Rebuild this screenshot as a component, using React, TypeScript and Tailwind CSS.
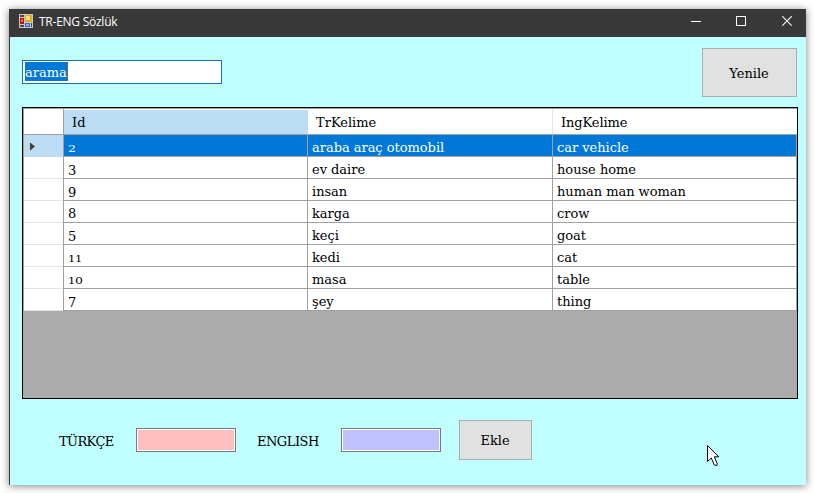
import React from "react";

const rows = [
  { id: "2", tr: "araba araç otomobil", en: "car vehicle" },
  { id: "3", tr: "ev daire", en: "house home" },
  { id: "9", tr: "insan", en: "human man woman" },
  { id: "8", tr: "karga", en: "crow" },
  { id: "5", tr: "keçi", en: "goat" },
  { id: "11", tr: "kedi", en: "cat" },
  { id: "10", tr: "masa", en: "table" },
  { id: "7", tr: "şey", en: "thing" },
];

/* Old-style numerals: 0-2 sit at x-height, 3/5/7/9 drop below the baseline. */
function digitClass(d: string) {
  if (d === "1") return "inline-block text-[10px] w-[7px] origin-left scale-x-[1.15]";
  if ("02".includes(d)) return "inline-block text-[10px] w-[8px] origin-left scale-x-[1.25]";
  if ("68".includes(d)) return "inline-block text-[13px]";
  return "inline-block text-[13px] translate-y-[1px]";
}

function OldStyle({ value }: { value: string }) {
  return (
    <span>
      {value.split("").map((d, i) => (
        <span key={i} className={digitClass(d)}>{d}</span>
      ))}
    </span>
  );
}

function AppIcon() {
  return (
    <svg width="14" height="14" viewBox="0 0 14 14" shapeRendering="crispEdges">
      <rect width="14" height="14" fill="#c9c9c9" />
      <rect x="1" y="1" width="4" height="2" fill="#484848" />
      <rect x="1" y="4" width="4" height="6" fill="#b01515" />
      <rect x="2" y="5" width="2" height="3" fill="#e8604c" />
      <rect x="6" y="1" width="7" height="7" fill="#e3ab20" />
      <rect x="7" y="2" width="4" height="4" fill="#ffe06e" />
      <rect x="6" y="9" width="5" height="4" fill="#3468c8" />
      <rect x="7" y="10" width="3" height="2" fill="#83b0f0" />
      <rect x="1" y="11" width="4" height="2" fill="#484848" />
      <rect x="12" y="9" width="1" height="4" fill="#484848" />
    </svg>
  );
}

function TitleBar() {
  return (
    <header className="flex h-7 items-center bg-[#393939] pl-[10px] text-white">
      <div className="-mt-1"><AppIcon /></div>
      <h1 className="-mt-[3px] ml-[6px] font-['Open_Sans',sans-serif] text-[12px] leading-4 tracking-[-0.25px]">
        TR-ENG Sözlük
      </h1>
      <div className="-mt-[3px] ml-auto mr-[14px] flex items-center gap-[35px]">
        <svg width="10" height="11" shapeRendering="crispEdges"><path d="M0 5.5H10" stroke="#fff" /></svg>
        <svg width="10" height="11" shapeRendering="crispEdges"><path d="M.5 .5h9v9h-9z" fill="none" stroke="#fff" /></svg>
        <svg className="ml-px" width="10" height="11"><path d="M.3 .3L9.7 9.7M9.7 .3L.3 9.7" stroke="#fff" strokeWidth="1.2" /></svg>
      </div>
    </header>
  );
}

function Grid() {
  return (
    <div className="ml-[12px] mt-[10px] h-[292px] w-[776px] border border-black bg-[#ababab]">
      <div className="border-l border-t border-[#a0a0a0]">
        <div className="flex h-[26px] border-b border-[#a0a0a0] bg-white leading-[27px]">
          <div className="w-[40px] border-r border-[#a0a0a0]" />
          <div className="mt-px w-[244px] border-r border-[#bcdcf4] bg-[#bcdcf4] pl-[8px] leading-[25px]">Id</div>
          <div className="w-[245px] border-r border-[#e5e5e5] pl-[8px] leading-[28px]">TrKelime</div>
          <div className="pl-[8px] leading-[28px] tracking-[-0.1px]">IngKelime</div>
        </div>
        {rows.map((r, i) => {
          const sel = i === 0;
          return (
            <div key={r.id} className="flex h-[22px] bg-white">
              <div className={sel ? "flex w-[39px] items-center bg-[#bcdcf4] pl-[5px]" : "w-[39px] border-b border-[#e5e5e5]"}>
                {sel && (
                  <svg width="8" height="11" viewBox="0 0 8 11"><path d="M.5 .5V10.5L6.5 5.5Z" fill="#404040" stroke="#fff" strokeWidth=".6" /></svg>
                )}
              </div>
              <div className={"flex flex-1 border-b border-l border-[#a0a0a0] leading-[26px] tracking-[-0.03px] whitespace-nowrap " + (sel ? "bg-[#0078d7] text-white" : "")}>
                <div className="h-[21px] w-[244px] border-r border-[#a0a0a0] pl-[4px]"><OldStyle value={r.id} /></div>
                <div className="h-[21px] w-[245px] border-r border-[#a0a0a0] pl-[4px]">{r.tr}</div>
                <div className="h-[21px] flex-1 border-r border-[#a0a0a0] pl-[4px]">{r.en}</div>
              </div>
            </div>
          );
        })}
      </div>
    </div>
  );
}

export default function App() {
  return (
    <div className="relative h-[493px] w-[814px] overflow-hidden bg-white pl-[9px] pt-[9px] font-['DejaVu_Serif',serif] text-[13px] text-black">
      <main className="h-[476px] w-[797px] bg-[#c0ffff] shadow-[0_1px_8px_rgba(0,0,0,0.5)]">
        <TitleBar />
        <div className="h-[448px] border-l border-[#393939]">
          <div className="flex justify-between pl-[12px] pr-[9px] pt-[11px]">
            <div className="mt-[12px] flex h-6 w-[200px] items-start border border-[#1b70b0] bg-white pl-[2px] pt-px">
              <span className="h-[19px] w-[43px] border-r border-[#806050] bg-[#0078d7] leading-[21px] text-white">arama</span>
            </div>
            <button className="h-[49px] w-[95px] border border-[#adadad] bg-[#e1e1e1] pr-px pt-[2px]">Yenile</button>
          </div>
          <Grid />
          <div className="mt-[21px] flex h-[40px] items-center">
            <label className="ml-[49px] mt-[3px] w-[77px] whitespace-nowrap tracking-[-0.6px]">TÜRKÇE</label>
            <div className="h-6 w-[100px] border border-[#7a7a7a] bg-white p-px"><div className="h-full bg-[#ffc0c0]" /></div>
            <label className="ml-[21px] mt-[3px] w-[84px] whitespace-nowrap tracking-[-0.5px]">ENGLISH</label>
            <div className="h-6 w-[100px] border border-[#7a7a7a] bg-white p-px"><div className="h-full bg-[#c0c0ff]" /></div>
            <button className="ml-[18px] h-[40px] w-[73px] border border-[#adadad] bg-[#e1e1e1] pr-px pt-[2px]">Ekle</button>
          </div>
        </div>
      </main>
      <svg className="absolute left-[707px] top-[445px]" width="13" height="22" viewBox="0 0 13 22">
        <path d="M.5 .5V16.5L4.3 13L7.3 20L9.8 20.5L10.3 18.8L7.3 11.8H11.8Z" fill="#fff" stroke="#000" />
      </svg>
    </div>
  );
}
